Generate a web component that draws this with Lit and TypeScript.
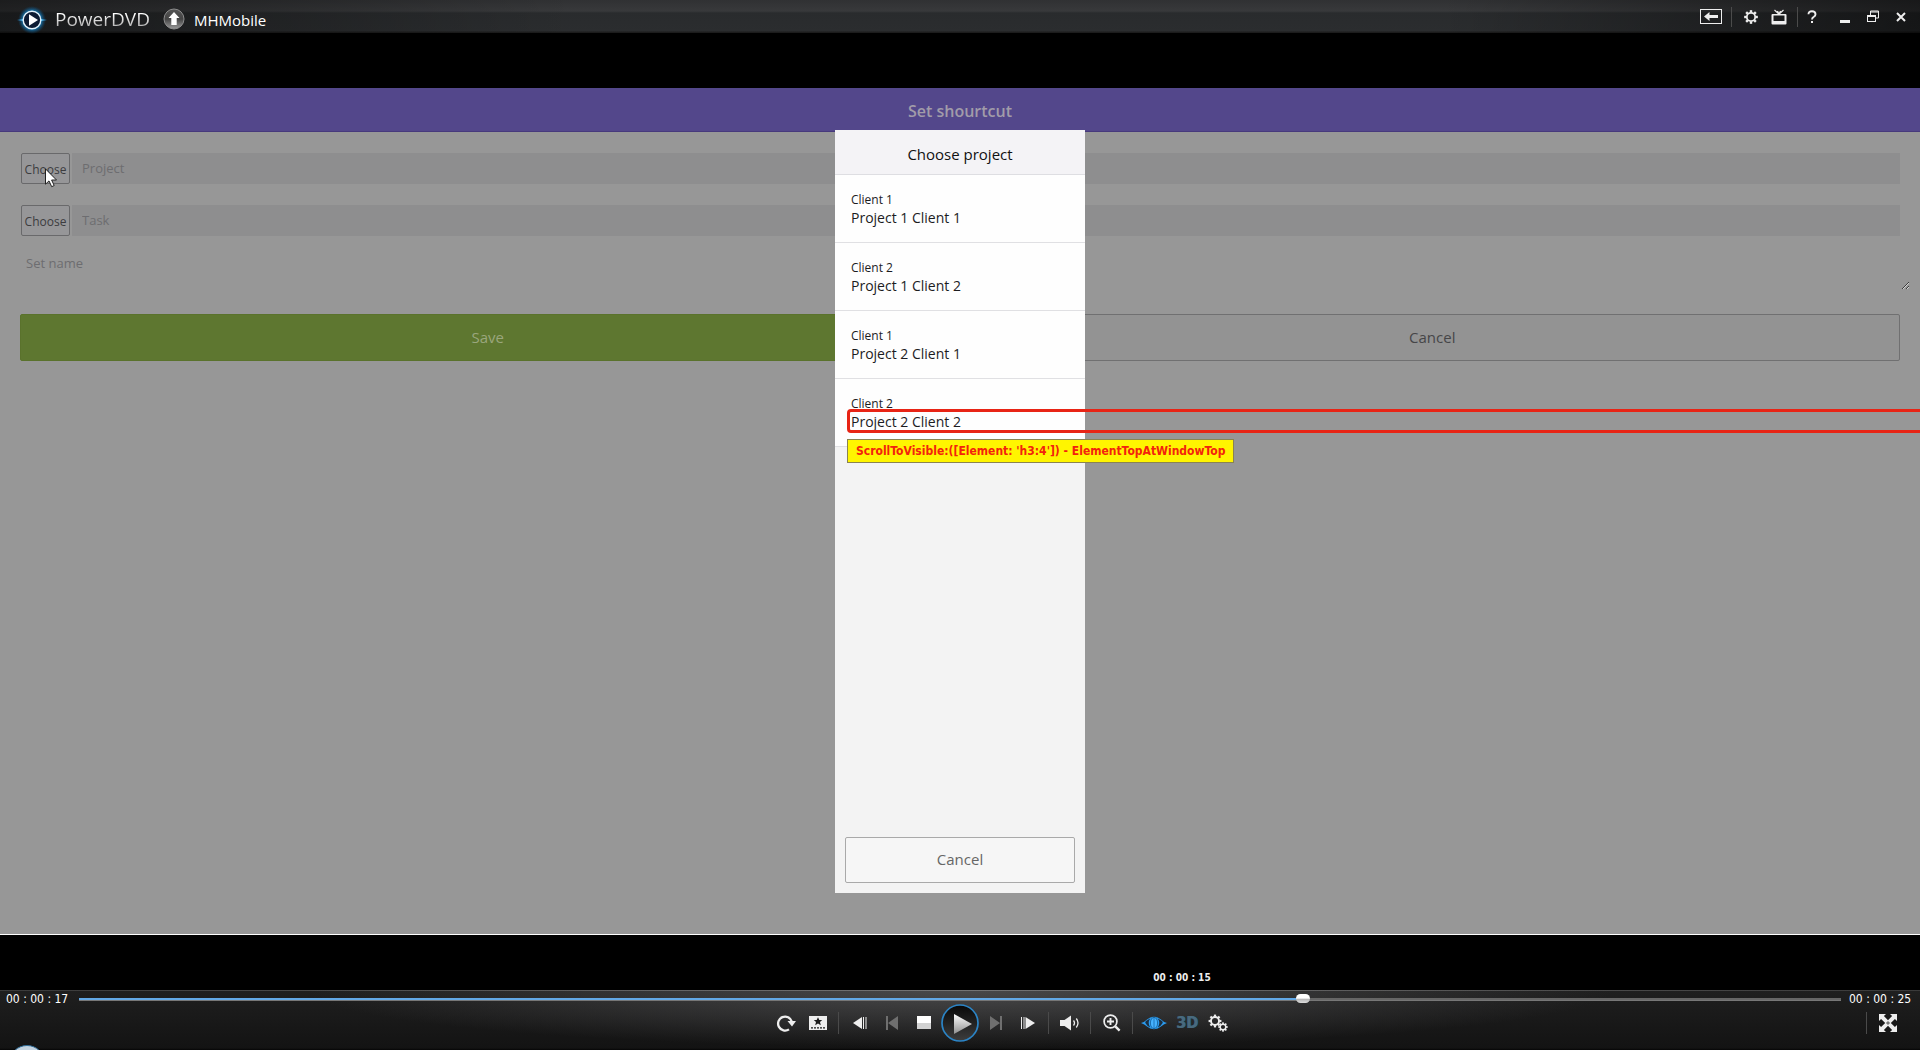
import { LitElement, html, css, svg } from "lit";
import { customElement, property } from "lit/decorators.js";
import { styleMap } from "lit/directives/style-map.js";

const GEAR_TEETH = [0, 45, 90, 135, 180, 225, 270, 315];

const gear = (cx: number, cy: number, r: number, stroke: number, tooth: number) => svg`
  <circle cx=${cx} cy=${cy} r=${r} fill="none" stroke="currentColor" stroke-width=${stroke} />
  ${GEAR_TEETH.map(
    (a) => svg`<rect x=${cx - tooth / 2} y=${cy - r - tooth * 1.1} width=${tooth} height=${tooth}
      fill="currentColor" transform="rotate(${a} ${cx} ${cy})" />`
  )}`;

const icons: Record<string, unknown> = {
  logo: html`<svg width="32" height="32" viewBox="0 0 32 32">
    <defs>
      <radialGradient id="halo"><stop offset="0.5" stop-color="#2ba4e6" /><stop offset="0.72" stop-color="#1577b4" stop-opacity=".7" /><stop offset="1" stop-color="#0a4a78" stop-opacity="0" /></radialGradient>
      <linearGradient id="ray"><stop offset="0" stop-color="#1c7fc0" stop-opacity="0" /><stop offset=".2" stop-color="#5cc0f5" /><stop offset=".8" stop-color="#5cc0f5" /><stop offset="1" stop-color="#1c7fc0" stop-opacity="0" /></linearGradient>
    </defs>
    <circle cx="16" cy="16" r="14" fill="url(#halo)" />
    <rect x="1" y="15" width="30" height="2" fill="url(#ray)" />
    <circle cx="16" cy="16" r="8.8" fill="#0d1b33" stroke="#e4f2fb" stroke-width="1.4" />
    <path d="M13 10.3 22 16 13 21.7z" fill="#fff" />
  </svg>`,
  up: html`<svg width="22" height="22" viewBox="0 0 22 22">
    <defs><linearGradient id="ball" x2="0" y2="1"><stop offset="0" stop-color="#555" /><stop offset=".5" stop-color="#444" /><stop offset="1" stop-color="#9a9a9a" /></linearGradient></defs>
    <circle cx="11" cy="11" r="10" fill="url(#ball)" stroke="#8d8d8d" />
    <path d="M11 4 16.5 10H13.7V17H8.3V10H5.5z" fill="#fff" />
  </svg>`,
  back: html`<svg width="22" height="16" viewBox="0 0 22 16">
    <rect x=".5" y=".5" width="21" height="14" fill="none" stroke="currentColor" />
    <path d="M4 7.5 9.5 3V6H18V9H9.5V12z" fill="currentColor" />
  </svg>`,
  settings: html`<svg width="14" height="14" viewBox="0 0 14 14">${gear(7, 7, 4.2, 1.8, 2.4)}</svg>`,
  tv: html`<svg width="16" height="16" viewBox="0 0 16 16">
    <path d="M3.5 1 8 5.2 12.5 1M6.5 2 8 5 9.5 2" fill="none" stroke="currentColor" stroke-width="1.2" />
    <path fill-rule="evenodd" d="M1.6 5H14.4Q15.5 5 15.5 6V14.5Q15.5 15.5 14.5 15.5H1.5Q0.5 15.5 0.5 14.5V6Q0.5 5 1.6 5zM2.5 6.5V12H13.5V6.5z" fill="currentColor" />
  </svg>`,
  help: html`<svg width="10" height="14" viewBox="0 0 10 14">
    <path d="M1.5 4.2Q1.5 1.2 5 1.2T8.5 4.2Q8.5 5.8 6.8 6.8 5 7.8 5 9.6" fill="none" stroke="currentColor" stroke-width="1.9" />
    <rect x="4" y="11" width="2" height="2" fill="currentColor" />
  </svg>`,
  minimize: html`<svg width="12" height="14" viewBox="0 0 12 14"><rect x="1" y="10" width="10" height="3" fill="currentColor" /></svg>`,
  restore: html`<svg width="14" height="14" viewBox="0 0 14 14">
    <path d="M4.5 5V1H12.5V8H9.5M4 2H13" fill="none" stroke="currentColor" />
    <rect x="1.5" y="5.5" width="8" height="6" fill="none" stroke="currentColor" /><path d="M1 6.5H10" stroke="currentColor" />
  </svg>`,
  close: html`<svg width="12" height="14" viewBox="0 0 12 14"><path d="M2 3 10 11M10 3 2 11" stroke="currentColor" stroke-width="2" /></svg>`,
  repeat: html`<svg width="20" height="20" viewBox="0 0 20 20">
    <path d="M13 16.4A7 7 0 1 1 15.8 8.5" fill="none" stroke="currentColor" stroke-width="2.3" />
    <path d="M11.5 8H20L16 13.5z" fill="currentColor" />
  </svg>`,
  bookmark: html`<svg width="18" height="16" viewBox="0 0 18 16">
    <rect y="1" width="18" height="14" fill="currentColor" />
    <path d="M9 2.2 10.3 5H13.2L11 7.1 11.8 10.2 9 8.6 6.2 10.2 7 7.1 4.8 5H7.7z" fill="#1b1b1b" />
    <path d="M2 12.8H16" stroke="#1b1b1b" stroke-width="1.2" stroke-dasharray="2 1" />
  </svg>`,
  slowBack: html`<svg width="14" height="14" viewBox="0 0 14 14"><path d="M0 7 9 1V13z" fill="currentColor" /><path d="M10.5 1V13M13 1V13" stroke="currentColor" /></svg>`,
  prev: html`<svg width="12" height="14" viewBox="0 0 12 14"><path d="M2 7 12 0V14z M0 0H2V14H0z" fill="#6f6f6f" /></svg>`,
  stop: html`<svg width="14" height="14" viewBox="0 0 14 14"><rect width="14" height="7" fill="#fff" /><rect y="7" width="14" height="6" fill="#d2d2d2" /></svg>`,
  play: html`<svg width="38" height="38" viewBox="0 0 38 38">
    <defs>
      <linearGradient id="well" x2="0" y2="1"><stop offset="0" stop-color="#080808" /><stop offset="1" stop-color="#3d3d3d" /></linearGradient>
      <linearGradient id="tri" x2="0" y2="1"><stop offset="0" stop-color="#fff" /><stop offset="1" stop-color="#8f8f8f" /></linearGradient>
    </defs>
    <circle cx="19" cy="19" r="18" fill="url(#well)" stroke="#2b84c6" stroke-width="1.7" />
    <path d="M13 10 31 20 13 30z" fill="url(#tri)" />
  </svg>`,
  next: html`<svg width="12" height="14" viewBox="0 0 12 14"><path d="M10 7 0 0V14z M10 0H12V14H10z" fill="#6f6f6f" /></svg>`,
  slowForward: html`<svg width="14" height="14" viewBox="0 0 14 14"><path d="M14 7 4.5 1V13z" fill="currentColor" /><path d="M.5 1V13M3 1V13" stroke="currentColor" /></svg>`,
  volume: html`<svg width="20" height="16" viewBox="0 0 20 16">
    <path d="M0 5H4.5L11 0.5V15.5L4.5 11H0z" fill="currentColor" />
    <path d="M13.5 5.5Q15.5 8 13.5 10.5M16.3 3.5Q19.7 8 16.3 12.5" fill="none" stroke="currentColor" stroke-width="1.3" />
  </svg>`,
  zoom: html`<svg width="18" height="18" viewBox="0 0 18 18">
    <circle cx="7.5" cy="7.5" r="6.4" fill="none" stroke="currentColor" stroke-width="1.7" />
    <path d="M7.5 4V11M4 7.5H11" stroke="currentColor" stroke-width="1.9" /><path d="M12.3 12.3 16.6 16.6" stroke="currentColor" stroke-width="2.4" />
  </svg>`,
  eye: html`<svg width="26" height="14" viewBox="0 0 26 14">
    <path d="M0 7Q3.5 6 6 3.4 9 .8 13 .8T20 3.4Q22.5 6 26 7 22.5 8 20 10.6 17 13.2 13 13.2T6 10.6Q3.5 8 0 7z" fill="#2b9cf0" />
    <path d="M9.2 2.6Q3 5.5 4.5 7.2Q6 10 9.2 11.4Q6.2 7 9.2 2.6zM16.8 2.6Q23 5.5 21.5 7.2Q20 10 16.8 11.4Q19.8 7 16.8 2.6z" fill="#1b2f42" />
    <ellipse cx="13" cy="7" rx="3.6" ry="5.6" fill="#45b2ff" stroke="#155a92" stroke-width=".8" /><path d="M13 1.5V12.5" stroke="#1668a8" stroke-width=".8" />
  </svg>`,
  gears: html`<svg width="20" height="18" viewBox="0 0 20 18">${gear(7, 7, 4, 1.9, 2.2)}${gear(15, 13, 2.8, 1.4, 1.7)}</svg>`,
  full: html`<svg width="18" height="18" viewBox="0 0 18 18">
    <path d="M0 0H7L4.9 2.1 9 6.2 13.1 2.1 11 0H18V7L15.9 4.9 11.8 9 15.9 13.1 18 11V18H11L13.1 15.9 9 11.8 4.9 15.9 7 18H0V11L2.1 13.1 6.2 9 2.1 4.9 0 7z" fill="currentColor" />
    <rect x="7.5" y="7.5" width="3" height="3" transform="rotate(45 9 9)" fill="#777" />
  </svg>`,
};

const buttonReset = css`
  :host, *, *::before, *::after { box-sizing: border-box; }
  button { margin: 0; padding: 0; border: 0; background: none; color: inherit; font: inherit; }
  svg { display: block; }
`;

@customElement("player-titlebar")
export class PlayerTitlebar extends LitElement {
  static styles = [
    buttonReset,
    css`
      :host {
        display: flex; align-items: center; height: 33px; padding: 0 5px 0 16px; color: #eee;
        background:
          linear-gradient(90deg, rgba(0, 0, 0, .42), transparent 30%, transparent 75%, rgba(0, 0, 0, .5)),
          linear-gradient(#303133, #38393b 11px, #292b2d 13px, #2b2d2f 31px, #1c1c1c 32px);
      }
      .logo { padding-top: 7px; }
      .product {
        margin: 4px 13px 0 7px; font: 500 19px/24px "Open Sans", "Noto Sans", sans-serif;
        background: linear-gradient(#fff 30%, #b5b5b5 80%); -webkit-background-clip: text; background-clip: text; color: transparent;
      }
      .up { padding-top: 4px; }
      .file { margin: 6px 0 0 9px; font: 15px/20px "Open Sans", "Noto Sans", sans-serif; color: #fff; }
      .tools { display: flex; align-items: center; margin-left: auto; }
      .tool { display: grid; place-items: center; width: 28px; height: 32px; }
      .wide { width: 32px; }
      .slim { width: 18px; margin-right: 10px; }
      .sep { width: 1px; height: 20px; margin: 0 5px 0 4px; background: #4b4b4b; }
    `,
  ];
  render() {
    const tool = (icon: string, label: string, cls = "") =>
      html`<button class="tool ${cls}" aria-label=${label}>${icons[icon]}</button>`;
    return html`
      <span class="logo">${icons.logo}</span>
      <span class="product">PowerDVD</span>
      <button class="up" aria-label="Up">${icons.up}</button>
      <span class="file">MHMobile</span>
      <div class="tools">
        ${tool("back", "Back", "wide")}<span class="sep"></span>
        ${tool("settings", "Settings")}${tool("tv", "TV mode")}<span class="sep"></span>
        ${tool("help", "Help", "slim")}${tool("minimize", "Minimize")}${tool("restore", "Restore")}${tool("close", "Close")}
      </div>
    `;
  }
}

interface Project { client: string; name: string; }

@customElement("project-picker")
export class ProjectPicker extends LitElement {
  @property({ attribute: false }) projects: Project[] = [];
  @property({ type: Number }) marked = -1;
  @property() note = "";
  static styles = [
    buttonReset,
    css`
      :host { display: flex; flex-direction: column; width: 250px; height: 90%; background: #f3f3f3; color: #1c1c1e; }
      .title {
        margin: 0; height: 45px; border-bottom: 1px solid #dedee2; background: #f4f3f6; text-align: center;
        font-weight: 400; font-size: 15px; line-height: 48px; color: #111;
      }
      .list { flex: 1; margin: 0; padding: 0; list-style: none; }
      .item { padding: 16px 16px 15px; border-bottom: 1px solid #e0e0e3; background: #fefefe; }
      .client { margin: 0; font-size: 12px; line-height: 18px; }
      .name { position: relative; margin: 0; font-weight: 400; font-size: 14px; line-height: 18px; white-space: nowrap; }
      .mark {
        position: absolute; left: -4px; top: -4px; width: 100vw; height: 24px;
        border: 3px solid #e82415; border-radius: 4px; pointer-events: none;
      }
      .note {
        position: absolute; left: -4px; top: 26px; padding: 0 8px; border: 1px solid #8a8350; background: #fff500;
        color: #f3220d; font: bold 12px/22px "DejaVu Sans Condensed", "DejaVu Sans", sans-serif;
      }
      .foot { padding: 10px; }
      .cancel {
        display: block; width: 100%; height: 46px; padding-bottom: 2px; border: 1px solid #a9a9a9; border-radius: 2px;
        background: #f6f6f6; color: #666; font-size: 15px;
      }
    `,
  ];
  render() {
    return html`
      <h2 class="title">Choose project</h2>
      <ul class="list">
        ${this.projects.map(
          (p, i) => html`<li class="item">
            <p class="client">${p.client}</p>
            <h3 class="name">${p.name}${i === this.marked
              ? html`<span class="mark"></span><span class="note">${this.note}</span>`
              : null}</h3>
          </li>`
        )}
      </ul>
      <div class="foot"><button class="cancel">Cancel</button></div>
    `;
  }
}

@customElement("shortcut-screen")
export class ShortcutScreen extends LitElement {
  private projects: Project[] = [
    { client: "Client 1", name: "Project 1 Client 1" },
    { client: "Client 2", name: "Project 1 Client 2" },
    { client: "Client 1", name: "Project 2 Client 1" },
    { client: "Client 2", name: "Project 2 Client 2" },
  ];
  static styles = [
    buttonReset,
    css`
      :host {
        position: relative; display: block; overflow: hidden; background: #979797; box-shadow: inset 0 -1px #fff;
        font-family: "Open Sans", "Noto Sans", sans-serif;
      }
      .bar {
        height: 44px; border-bottom: 1px solid #47397c; background: #53478b; text-align: center;
        font-size: 16px; line-height: 46px; font-weight: 600; color: #a19ca9; margin: 0;
      }
      .form { display: flex; flex-direction: column; padding: 21px 20px; }
      .fields { display: grid; gap: 21px; }
      .field { display: flex; gap: 2px; padding-left: 1px; }
      .choose {
        width: 49px; height: 31px; padding-top: 2px; border: 1px solid #69696b; border-radius: 2px;
        background: #969698; color: #3c3c3f; font-size: 12px;
      }
      .value {
        flex: 1; min-width: 0; height: 31px; padding: 0 10px 2px; border: 0; background: #8e8e8f;
        font: inherit; font-size: 13px; color: #68686a;
      }
      .value::placeholder, .named::placeholder { color: #6d6d70; opacity: 1; }
      .named {
        height: 38px; margin: 16px -10px 24px 0; padding: 2px 6px; border: 0; background: transparent;
        font: inherit; font-size: 13px; line-height: 18px; resize: vertical;
      }
      .actions { display: grid; grid-template-columns: 1fr 1fr; gap: 9px; }
      .action {
        height: 47px; padding-bottom: 2px; border: 1px solid #707071; border-radius: 2px; background: #939393;
        color: #464648; font-size: 15px;
      }
      .save { border-color: #5a722c; background: #5e7730; color: #9aa67d; }
      .overlay { position: absolute; inset: 0; display: flex; align-items: center; justify-content: center; }
      .pointer { position: absolute; left: 45px; top: 80px; }
    `,
  ];
  render() {
    const field = (name: string) => html`<div class="field">
      <button class="choose">Choose</button>
      <input class="value" placeholder=${name} aria-label=${name} />
    </div>`;
    return html`
      <h1 class="bar">Set shourtcut</h1>
      <div class="form">
        <div class="fields">${field("Project")}${field("Task")}</div>
        <textarea class="named" placeholder="Set name" aria-label="Set name"></textarea>
        <div class="actions">
          <button class="action save">Save</button>
          <button class="action">Cancel</button>
        </div>
      </div>
      <svg class="pointer" width="13" height="20" viewBox="0 0 13 20">
        <path d="M.5.9V16.2L4 12.9 6.7 18.7 9.2 17.5 6.6 12H11.5z" fill="#fff" stroke="#222" />
      </svg>
      <div class="overlay">
        <project-picker .projects=${this.projects} .marked=${3}
          note="ScrollToVisible:([Element: 'h3:4']) - ElementTopAtWindowTop"></project-picker>
      </div>
    `;
  }
}

@customElement("player-controls")
export class PlayerControls extends LitElement {
  @property({ type: Number }) progress = 69.6;
  @property({ type: Number }) hover = 62.6;
  static styles = [
    buttonReset,
    css`
      :host {
        position: relative; display: block; height: 60px; padding-top: 4px; color: #eee;
        background:
          linear-gradient(90deg, transparent, rgba(150, 150, 150, .5) 50%, transparent) 0 0 / 100% 1px no-repeat,
          radial-gradient(ellipse 34% 58px at 50% 0, rgba(95, 95, 97, .65), transparent),
          linear-gradient(#3a3a3a 1px, #1f1f1f 1px, #131313 58px, #050505);
        font-family: "DejaVu Sans Condensed", "DejaVu Sans", sans-serif;
      }
      .seek { display: flex; align-items: center; height: 10px; padding: 0 9px 0 6px; }
      .time { font-size: 12px; line-height: 14px; width: 62px; white-space: pre; color: #fff; }
      .end { text-align: right; }
      .track { position: relative; flex: 1; display: flex; margin: 0 8px 0 11px; }
      .range { flex: 1; min-width: 0; height: 10px; margin: 0; appearance: none; background: transparent; }
      .range::-webkit-slider-runnable-track {
        height: 2px;
        background: linear-gradient(90deg, #62a8e6 var(--done), #666 var(--done));
        box-shadow: 0 1px 0 #777;
      }
      .range::-webkit-slider-thumb {
        appearance: none; width: 14px; height: 9px; margin-top: -4px; border-radius: 5px;
        background: linear-gradient(#fff 45%, #b9b9b9 60%, #ddd);
      }
      .tip {
        position: absolute; bottom: 19px; transform: translateX(-50%); white-space: pre;
        font-weight: bold; font-size: 10px; line-height: 14px; color: #eee;
      }
      .controls { display: grid; grid-template-columns: 1fr auto 1fr; align-items: center; padding: 0 16px; }
      .group { display: flex; align-items: center; }
      .left { justify-content: flex-end; }
      .tool { display: grid; place-items: center; width: 32px; height: 32px; }
      .play { width: 40px; display: grid; place-items: center; height: 38px; }
      .sep { width: 1px; height: 22px; margin: 0 5px 0 4px; background: #4a4a4a; }
      .last { margin-left: auto; }
      .three {
        padding-left: 2px; font: bold 16px/20px "DejaVu Sans Condensed", "DejaVu Sans", sans-serif;
        color: #4a6a7c; text-shadow: 1px 0 #1d5a82;
      }
      .orb-clip { position: absolute; inset: auto auto 0 0; width: 54px; height: 6px; overflow: hidden; }
      .orb { display: block; width: 36px; height: 36px; margin: 1px auto 0; border: 1px solid #2d6a96; border-radius: 50%; background: #c3d3e0; }
    `,
  ];
  render() {
    const tool = (icon: string, label: string) =>
      html`<button class="tool" aria-label=${label}>${icons[icon]}</button>`;
    const sep = html`<span class="sep"></span>`;
    return html`
      <div class="seek">
        <span class="time">00 : 00 : 17</span>
        <div class="track">
          <input class="range" type="range" min="0" max="100" step="0.1" .value=${String(this.progress)}
            aria-label="Position" style=${styleMap({ "--done": `${this.progress}%` })} />
          <span class="tip" style=${styleMap({ left: `${this.hover}%` })}>00 : 00 : 15</span>
        </div>
        <span class="time end">00 : 00 : 25</span>
      </div>
      <div class="controls">
        <div class="group left">
          ${tool("repeat", "Repeat")}${tool("bookmark", "Bookmark")}${sep}
          ${tool("slowBack", "Step back")}${tool("prev", "Previous")}${tool("stop", "Stop")}
        </div>
        <button class="play" aria-label="Play">${icons.play}</button>
        <div class="group">
          ${tool("next", "Next")}${tool("slowForward", "Step forward")}${sep}
          ${tool("volume", "Volume")}${sep}${tool("zoom", "Zoom")}${sep}
          ${tool("eye", "TrueTheater")}<button class="tool three">3D</button>${tool("gears", "Playback settings")}
          <span class="sep last"></span>${tool("full", "Full screen")}
        </div>
      </div>
      <span class="orb-clip"><span class="orb"></span></span>
    `;
  }
}

@customElement("app-root")
export class AppRoot extends LitElement {
  static styles = css`
    :host { display: flex; flex-direction: column; min-height: 100vh; background: #000; }
    .stage { flex: 1; display: grid; padding: 55px 0; }
  `;
  render() {
    return html`
      <player-titlebar></player-titlebar>
      <main class="stage"><shortcut-screen></shortcut-screen></main>
      <player-controls></player-controls>
    `;
  }
}
